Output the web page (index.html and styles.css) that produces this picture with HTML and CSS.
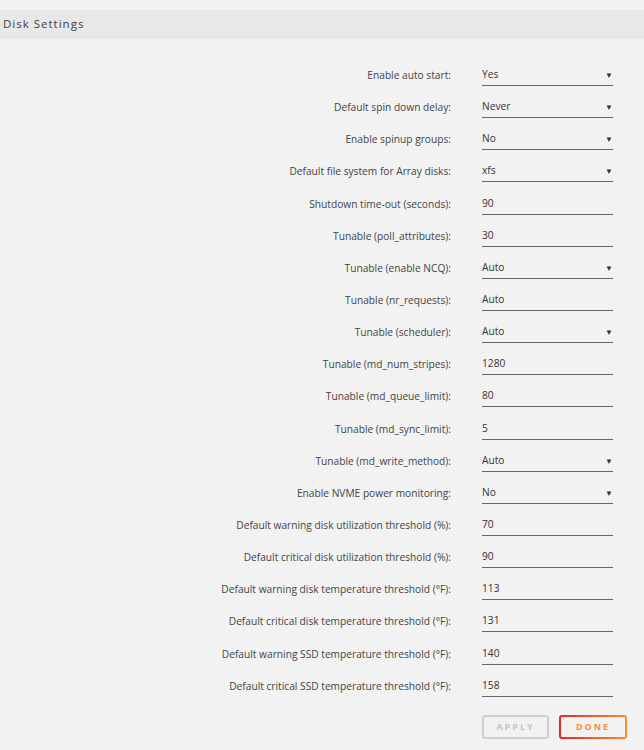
FILE: index.html
```html
<!DOCTYPE html>
<html>
<head>
<meta charset="utf-8">
<link rel="stylesheet" href="styles.css">
</head>
<body>
<div class="title">Disk Settings</div>
<form class="settings">
  <label>Enable auto start:</label><div class="field sel">Yes<span class="arrow">▼</span></div>
  <label>Default spin down delay:</label><div class="field sel">Never<span class="arrow">▼</span></div>
  <label>Enable spinup groups:</label><div class="field sel">No<span class="arrow">▼</span></div>
  <label>Default file system for Array disks:</label><div class="field sel">xfs<span class="arrow">▼</span></div>
  <label>Shutdown time-out (seconds):</label><div class="field">90</div>
  <label>Tunable (poll_attributes):</label><div class="field">30</div>
  <label>Tunable (enable NCQ):</label><div class="field sel">Auto<span class="arrow">▼</span></div>
  <label>Tunable (nr_requests):</label><div class="field">Auto</div>
  <label>Tunable (scheduler):</label><div class="field sel">Auto<span class="arrow">▼</span></div>
  <label>Tunable (md_num_stripes):</label><div class="field">1280</div>
  <label>Tunable (md_queue_limit):</label><div class="field">80</div>
  <label>Tunable (md_sync_limit):</label><div class="field">5</div>
  <label>Tunable (md_write_method):</label><div class="field sel">Auto<span class="arrow">▼</span></div>
  <label>Enable NVME power monitoring:</label><div class="field sel">No<span class="arrow">▼</span></div>
  <label>Default warning disk utilization threshold (%):</label><div class="field">70</div>
  <label>Default critical disk utilization threshold (%):</label><div class="field">90</div>
  <label>Default warning disk temperature threshold (°F):</label><div class="field">113</div>
  <label>Default critical disk temperature threshold (°F):</label><div class="field">131</div>
  <label>Default warning SSD temperature threshold (°F):</label><div class="field">140</div>
  <label>Default critical SSD temperature threshold (°F):</label><div class="field">158</div>
</form>
<div class="buttons">
  <div class="btn apply">APPLY</div>
  <div class="btn done">DONE</div>
</div>
</body>
</html>
```
FILE: styles.css
```css
html, body {
  margin: 0;
  padding: 0;
  background: #f2f2f2;
  font-family: "Open Sans", "Noto Sans", sans-serif;
  color: #505050;
}
.title {
  margin-top: 10px;
  height: 29px;
  line-height: 28px;
  background: #e8e8e8;
  padding-left: 3px;
  font-size: 11.5px;
  letter-spacing: 1px;
  color: #404040;
}
.settings {
  display: grid;
  grid-template-columns: 451px 131px;
  column-gap: 31px;
  row-gap: 10.15px;
  margin-top: 25px;
}
.settings label {
  text-align: right;
  font-size: 10.2px;
  line-height: 22px;
  color: #444;
}
.field {
  position: relative;
  height: 21px;
  line-height: 21px;
  border-bottom: 1px solid #666;
  font-size: 10.2px;
  color: #333;
}
.arrow {
  position: absolute;
  right: 0;
  top: 0;
  font-size: 8px;
  color: #333;
}
.buttons {
  display: flex;
  gap: 10px;
  margin-left: 482px;
  margin-top: 18px;
}
.btn {
  box-sizing: border-box;
  width: 68px;
  height: 24px;
  line-height: 20px;
  text-align: center;
  font-size: 9px;
  font-weight: bold;
  letter-spacing: 2px;
  border-radius: 3px;
}
.apply {
  border: 2px solid #cfcfcf;
  color: #c4c4c4;
  width: 67px;
}
.done {
  border: 2px solid transparent;
  background: linear-gradient(#f2f2f2, #f2f2f2) padding-box, linear-gradient(90deg, #e22828, #ff8c2f) border-box;
  color: #ff8c2f;
}
```
